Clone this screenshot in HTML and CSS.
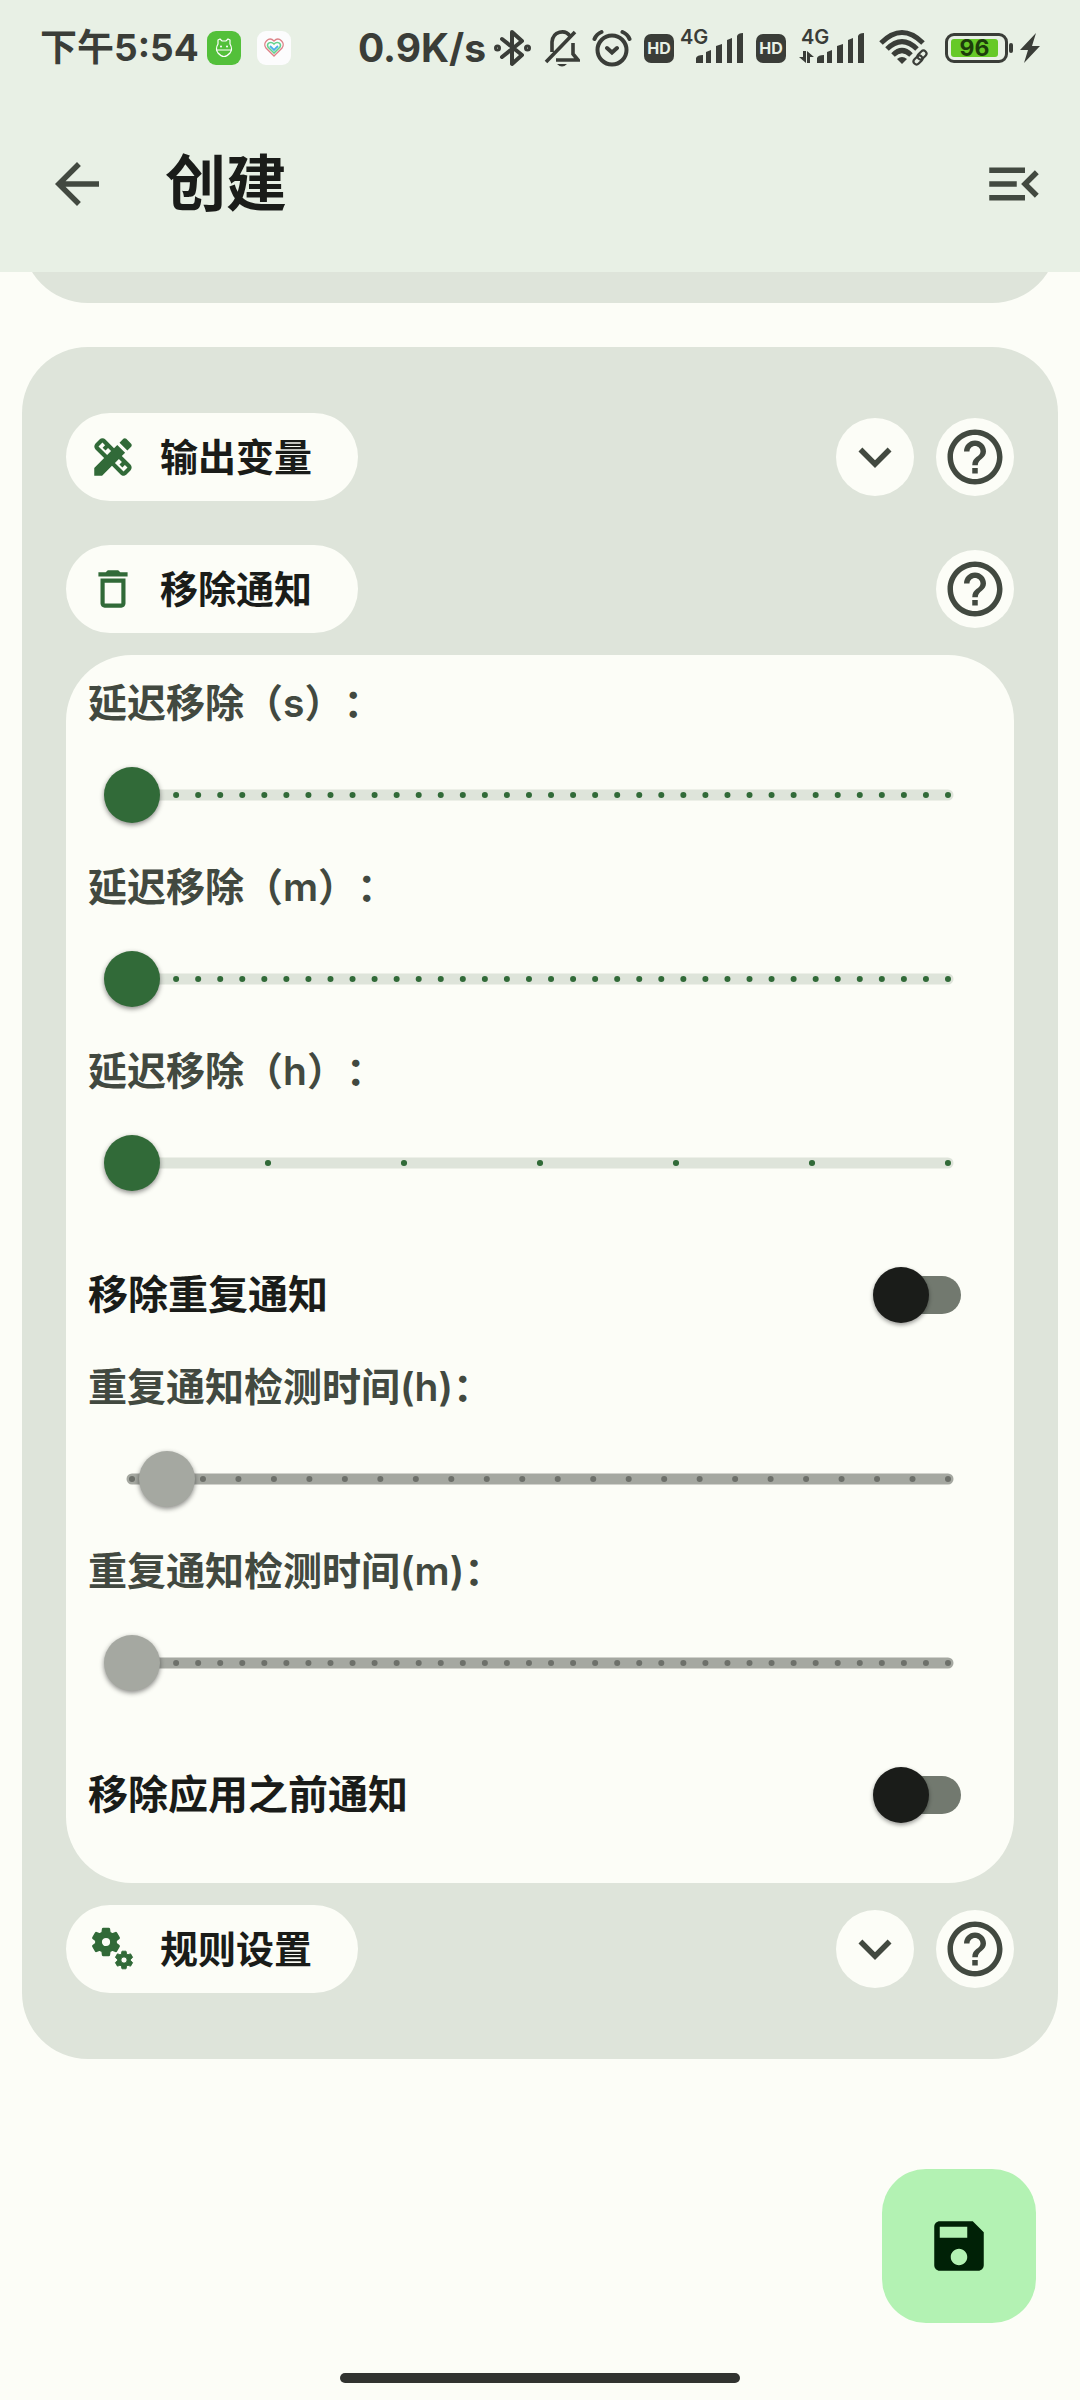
FILE: index.html
```html
<!DOCTYPE html>
<html lang="zh-CN">
<head>
<meta charset="utf-8">
<meta name="viewport" content="width=device-width, initial-scale=1">
<title>创建</title>
<link rel="stylesheet" href="styles.css">
</head>
<body>
<svg class="defs" aria-hidden="true">
  <symbol id="help" viewBox="0 0 24 24"><path d="M11 18h2v-2h-2v2zm1-16C6.480 2 2 6.480 2 12s4.480 10 10 10 10-4.480 10-10S17.520 2 12 2zm0 18c-4.410 0-8-3.590-8-8s3.590-8 8-8 8 3.590 8 8-3.590 8-8 8zm0-14c-2.210 0-4 1.790-4 4h2c0-1.100.9-2 2-2s2 .9 2 2c0 2-3 1.750-3 5h2c0-2.250 3-2.500 3-5 0-2.210-1.790-4-4-4z"/></symbol>
  <symbol id="expand" viewBox="0 0 24 24"><path d="M16.590 8.590 12 13.170 7.410 8.590 6 10l6 6 6-6z"/></symbol>
  <symbol id="gear" viewBox="0 0 24 24"><path stroke="currentColor" stroke-width="1" d="M19.140 12.940c.04-.3.06-.61.06-.94 0-.32-.02-.64-.07-.94l2.030-1.580c.18-.14.23-.41.12-.61l-1.920-3.320c-.12-.22-.37-.29-.59-.22l-2.390.96c-.5-.38-1.030-.7-1.620-.94l-.36-2.540c-.04-.24-.24-.41-.48-.41h-3.840c-.24 0-.43.17-.47.41l-.36 2.540c-.59.24-1.130.57-1.620.94l-2.390-.96c-.22-.08-.47 0-.59.22L2.740 8.870c-.12.21-.08.47.12.61l2.030 1.580c-.05.3-.09.63-.09.94s.02.64.07.94l-2.030 1.580c-.18.14-.23.41-.12.61l1.920 3.320c.12.22.37.29.59.22l2.390-.96c.5.38 1.030.7 1.620.94l.36 2.540c.05.24.24.41.48.41h3.840c.24 0 .44-.17.47-.41l.36-2.540c.59-.24 1.130-.56 1.620-.94l2.390.96c.22.08.47 0 .59-.22l1.920-3.320c.12-.22.07-.47-.12-.61l-2.010-1.580zM12 15.400a3.400 3.400 0 1 1 0-6.800 3.400 3.400 0 0 1 0 6.800z"/></symbol>
  <symbol id="bars" viewBox="0 0 48 30"><path d="M0 30v-5q1-3 7-3v8zM10 30V19l5-2v13zM20 30V13l6-2v19zM31 30V7l5-2v25zM41 30V3q1-3 6-3v30z"/></symbol>
</svg>

<header class="top">
  <div class="status">
    <div class="status-left">
      <span class="clock">下午5:54</span>
      <svg class="app" viewBox="0 0 34 34"><rect width="34" height="34" rx="9" fill="#53c03a"/><path d="M11 13V9l2-1 2 2h4l2-2 2 1v4q3 5 0 9-6 7-12 0-3-4 0-9zM9 19h16" fill="none" stroke="#fff" stroke-width="1.200"/><circle cx="14" cy="15.500" r="1" fill="#fff"/><circle cx="20" cy="15.500" r="1" fill="#fff"/></svg>
      <svg class="app" viewBox="0 0 34 34"><rect width="34" height="34" rx="9" fill="#fcfcfd"/><g fill="none"><path d="M17 25 9 17c-4-5 3-12 8-7 5-5 12 2 8 7z" stroke="#dc8287" stroke-width="1.400"/><path d="m17 22-6-6c-2-4 3-6 6-3 3-3 8-1 6 3z" stroke="#62d28e" stroke-width="1.600"/><path d="m13 15 4 4 4-4" stroke="#4bb0e6" stroke-width="1.800"/></g></svg>
    </div>
    <div class="status-right">
      <span class="speed">0.9K/s</span>
      <svg width="37" height="40" viewBox="0 0 37 40" fill="none" stroke="currentColor" stroke-width="4" stroke-linejoin="round" stroke-linecap="round"><path d="m8 11 20 16-10 9V4l10 9L8 29"/><circle cx="3.500" cy="20" r="1.500"/><circle cx="33.500" cy="20" r="1.500"/></svg>
      <svg class="bell" width="36" height="40" viewBox="0 0 36 40" fill="none" stroke="currentColor" stroke-width="3.600"><path d="M8 24V14C9 3 21 1 26 8M2 34 31 4M12 32h22l-5-6V15"/><path d="M13 36h10q-5 5-10 0z" fill="currentColor" stroke="none"/></svg>
      <svg class="alarm" width="40" height="40" viewBox="0 0 40 40" fill="none" stroke="currentColor" stroke-width="4" stroke-linecap="round"><circle cx="20" cy="22" r="14.500"/><path d="m15 20 5 4.500 5-4.500M2.500 11q2-5 7-7M37.500 11q-2-5-7-7"/></svg>
      <span class="hd">HD</span>
      <span class="signal"><span class="net">4G</span><svg class="bars"><use href="#bars"/></svg></span>
      <span class="hd">HD</span>
      <span class="signal second"><span class="net">4G</span><svg class="arrows" viewBox="0 0 15 12"><path d="M4 0h3v12L0 6h4zM8 0l7 6h-4v6H8z"/></svg><svg class="bars"><use href="#bars"/></svg></span>
      <svg class="wifi" width="50" height="36" viewBox="0 0 50 36" fill="none" stroke="currentColor" stroke-width="5"><path d="M2 13q21-21 42 0M8 19q15-15 30 0M14 25q9-9 18 0"/><path d="m23 34-5-5q5-4 10 0z" fill="currentColor" stroke="none"/><g stroke="#e8f0e5" stroke-width="7"><path d="m38 31 7-7"/></g><g stroke-width="2.200"><rect x="40" y="20" width="6" height="10" rx="3" transform="rotate(45 43 25)"/><rect x="36" y="25" width="6" height="10" rx="3" transform="rotate(45 39 30)"/></g></svg>
      <span class="battery"><span class="level">96</span></span>
      <svg class="bolt" width="20" height="30" viewBox="0 0 20 30"><path d="M16 0 0 17h8L4 30l16-17h-8z"/></svg>
    </div>
  </div>
  <div class="appbar">
    <button class="icon-btn" aria-label="返回"><svg class="icon" viewBox="0 0 24 24"><path d="M20 11H7.830l5.590-5.590L12 4l-8 8 8 8 1.410-1.410L7.830 13H20v-2z"/></svg></button>
    <h1>创建</h1>
    <button class="icon-btn menu" aria-label="菜单"><svg class="icon" viewBox="0 0 24 24"><path d="M3 18h13v-2H3v2zm0-5h10v-2H3v2zm0-7v2h13V6H3zm18 9.590L17.420 12 21 8.410 19.590 7l-5 5 5 5L21 15.590z"/></svg></button>
  </div>
</header>

<main>
  <section class="card previous"></section>
  <section class="card">
    <div class="row">
      <h2 class="chip"><svg viewBox="0 0 24 24"><path d="M16.240 11.510l1.570-1.570-3.750-3.750-1.570 1.570-4.140-4.130c-.78-.78-2.050-.78-2.830 0l-1.900 1.900c-.78.78-.78 2.050 0 2.830l4.130 4.130L3 17.250V21h3.750l4.760-4.760 4.130 4.130c.95.95 2.230.6 2.830 0l1.900-1.900c.78-.78.78-2.050 0-2.830l-4.130-4.130zm-7.060-.44L5.040 6.940l1.890-1.900L8.200 6.310 7.020 7.500l1.410 1.410 1.190-1.190 1.450 1.450-1.890 1.900zm7.880 7.890l-4.130-4.130 1.900-1.900 1.450 1.450-1.190 1.190 1.410 1.410 1.190-1.190 1.270 1.270-1.900 1.900zM20.710 7.040c.39-.39.39-1.020 0-1.410l-2.340-2.340c-.47-.47-1.120-.29-1.410 0l-1.830 1.830 3.750 3.750 1.830-1.830z"/></svg>输出变量</h2>
      <button class="round" aria-label="展开输出变量"><svg class="icon"><use href="#expand"/></svg></button>
      <button class="round" aria-label="输出变量帮助"><svg class="icon"><use href="#help"/></svg></button>
    </div>
    <div class="row spaced">
      <h2 class="chip"><svg viewBox="0 0 24 24"><path d="M6 19c0 1.100.9 2 2 2h8c1.100 0 2-.9 2-2V7H6v12zM8 9h8v10H8V9zm7.500-5l-1-1h-5l-1 1H5v2h14V4h-3.500z"/></svg>移除通知</h2>
      <button class="round" aria-label="移除通知帮助"><svg class="icon"><use href="#help"/></svg></button>
    </div>

    <div class="panel">
      <label for="delay-s">延迟移除（s）：</label>
      <div class="slider">
        <svg><line class="rail" x2="100%"/><line class="ticks" x2="100%" pathLength="37"/></svg>
        <input id="delay-s" type="range" min="0" max="37" value="0">
      </div>
      <label for="delay-m">延迟移除（m）：</label>
      <div class="slider">
        <svg><line class="rail" x2="100%"/><line class="ticks" x2="100%" pathLength="37"/></svg>
        <input id="delay-m" type="range" min="0" max="37" value="0">
      </div>
      <label for="delay-h">延迟移除（h）：</label>
      <div class="slider">
        <svg><line class="rail" x2="100%"/><line class="ticks" x2="100%" pathLength="6"/></svg>
        <input id="delay-h" type="range" min="0" max="6" value="0">
      </div>
      <div class="toggle">
        <label for="dup">移除重复通知</label>
        <input id="dup" type="checkbox" role="switch">
      </div>
      <label for="dup-h">重复通知检测时间(h)：</label>
      <div class="slider off">
        <svg><line class="rail" x2="100%"/><line class="ticks" x2="100%" pathLength="23"/></svg>
        <input id="dup-h" type="range" min="1" max="24" value="2" disabled>
      </div>
      <label for="dup-m">重复通知检测时间(m)：</label>
      <div class="slider off">
        <svg><line class="rail" x2="100%"/><line class="ticks" x2="100%" pathLength="37"/></svg>
        <input id="dup-m" type="range" min="0" max="37" value="0" disabled>
      </div>
      <div class="toggle">
        <label for="before">移除应用之前通知</label>
        <input id="before" type="checkbox" role="switch">
      </div>
    </div>

    <div class="row">
      <h2 class="chip"><svg viewBox="0 0 50 50"><use href="#gear" x="1" y="1" width="34" height="34"/><use href="#gear" x="25" y="25" width="22" height="22"/></svg>规则设置</h2>
      <button class="round" aria-label="展开规则设置"><svg class="icon"><use href="#expand"/></svg></button>
      <button class="round" aria-label="规则设置帮助"><svg class="icon"><use href="#help"/></svg></button>
    </div>
  </section>
</main>

<button class="fab" aria-label="保存"><svg class="icon" viewBox="0 0 24 24"><path d="M17 3H5c-1.110 0-2 .9-2 2v14c0 1.100.89 2 2 2h14c1.100 0 2-.9 2-2V7l-4-4zm-5 16c-1.660 0-3-1.340-3-3s1.340-3 3-3 3 1.340 3 3-1.340 3-3 3zm3-10H5V5h10v4z"/></svg></button>
<div class="handle"></div>
</body>
</html>
```
FILE: styles.css
```css
:root {
  --page: #fcfdf7;
  --bar: #e8f0e5;
  --card: #dee4da;
  --green: #316a38;
  --text: #1a1c19;
  --muted: #424940;
}

* { box-sizing: border-box; }

body {
  margin: 0;
  min-height: 100vh;
  background: var(--page);
  color: var(--text);
  font-family: Inter, "Noto Sans CJK SC", sans-serif;
  text-spacing-trim: space-all;
}

svg { display: block; flex: none; fill: currentColor; }
svg[fill="none"] { fill: none; }
.defs { position: absolute; width: 0; height: 0; }
.icon { width: 66px; height: 66px; }
button { padding: 0; border: 0; background: none; color: var(--muted); font: inherit; }
h1, h2 { margin: 0; font-weight: 700; }

/* Top area */
.top { position: sticky; top: 0; z-index: 2; background: var(--bar); }
.status {
  display: flex;
  justify-content: space-between;
  height: 96px;
  padding: 0 40px;
  align-items: center;
  color: #3a3d38;
  font-weight: 700;
}
.status-left, .status-right { display: flex; align-items: center; }
.clock { font-size: 37px; line-height: 48px; }
.app { width: 34px; height: 34px; margin-left: 8px; }
.app + .app { margin-left: 16px; }
.speed { font-size: 39px; line-height: 48px; margin-right: 8px; }
.bell { margin-left: 13px; }
.alarm { margin: 0 12px; }
.hd {
  width: 30px;
  border-radius: 7px;
  background: currentColor;
  font-size: 16px;
  line-height: 29px;
  text-align: center;
}
.hd::first-line { color: var(--bar); }
.signal { position: relative; width: 48px; margin: 0 12px 0 22px; }
.signal.second { margin: 0 14px 0 31px; }
.bars { width: 48px; height: 30px; }
.net { position: absolute; left: -16px; top: -6px; font-size: 20px; line-height: 20px; font-weight: 600; }
.arrows { position: absolute; left: -18px; bottom: 0; width: 15px; height: 12px; }
.battery {
  position: relative;
  width: 63px;
  height: 30px;
  margin: 0 12px 0 16px;
  padding: 3px;
  border: 3px solid;
  border-radius: 9px;
}
.battery::after {
  content: "";
  position: absolute;
  right: -8px;
  top: 7px;
  width: 4px;
  height: 10px;
  border-radius: 2px;
  background: currentColor;
}
.level {
  display: block;
  width: 47px;
  border-radius: 3px;
  background: #66c927;
  color: #1d3d0c;
  font-size: 23px;
  line-height: 18px;
  text-align: center;
}

.appbar { display: flex; align-items: center; height: 176px; padding: 0 33px 0 44px; }
.appbar h1 { margin-left: 55px; font-size: 61px; line-height: 80px; }
.menu { margin-left: auto; }

/* Cards */
.card { margin: 0 22px 44px; padding: 66px 44px; border-radius: 66px; background: var(--card); }
.card.previous { margin-top: -101px; }
.row { display: flex; align-items: center; gap: 22px; }
.row.spaced { margin: 44px 0 22px; }
.chip {
  display: flex;
  align-items: center;
  gap: 22px;
  min-width: 292px;
  height: 88px;
  margin-right: auto;
  padding: 0 44px 0 22px;
  border-radius: 44px;
  background: var(--page);
  font-size: 38px;
  line-height: 52px;
}
.chip svg { width: 50px; height: 50px; color: var(--green); }
.round {
  display: grid;
  place-items: center;
  width: 78px;
  height: 78px;
  border-radius: 50%;
  background: var(--page);
}

/* Settings panel */
.panel { margin-bottom: 22px; padding: 22px; border-radius: 66px; background: var(--page); }
.panel label {
  display: block;
  color: var(--muted);
  font-size: 39px;
  line-height: 52px;
  font-weight: 600;
}
.slider { display: grid; align-items: center; height: 132px; margin: 0 16px; }
.slider > * { grid-area: 1 / 1; }
.slider svg { width: calc(100% - 56px); height: 2px; margin: 0 28px; overflow: visible; }
.slider line { transform: translateY(1px); stroke-linecap: round; }
.rail { stroke: var(--card); stroke-width: 11px; }
.ticks { stroke: var(--green); stroke-width: 6px; stroke-dasharray: 0.001 0.999; stroke-dashoffset: 0.0005; }
.slider input { appearance: none; width: 100%; height: 56px; margin: 0; background: none; }
.slider input::-webkit-slider-thumb {
  appearance: none;
  width: 56px;
  height: 56px;
  border-radius: 50%;
  background: var(--green);
  box-shadow: 0 2px 5px rgba(0, 0, 0, 0.45);
}
.off .rail { stroke: #a5a8a1; }
.off .ticks { stroke: #6d706a; }
.slider.off input::-webkit-slider-thumb { background: #a5a8a1; }

.toggle { display: flex; align-items: center; justify-content: space-between; height: 132px; padding-right: 31px; }
.panel .toggle label { color: var(--text); font-size: 40px; }
.toggle input { appearance: none; position: relative; width: 88px; height: 56px; margin: 0; }
.toggle input::before {
  content: "";
  position: absolute;
  inset: 9px 0 9px 8px;
  border-radius: 19px;
  background: #72796f;
}
.toggle input::after {
  content: "";
  position: absolute;
  left: 0;
  top: 0;
  width: 56px;
  height: 56px;
  border-radius: 50%;
  background: var(--text);
  box-shadow: 0 2px 4px rgba(0, 0, 0, 0.4);
}
.toggle input:checked::after { left: 32px; }

/* Floating controls */
.fab {
  position: fixed;
  right: 44px;
  bottom: 77px;
  display: grid;
  place-items: center;
  width: 154px;
  height: 154px;
  border-radius: 44px;
  background: #b3f2b3;
  color: #002106;
}
.handle {
  position: fixed;
  left: 50%;
  bottom: 17px;
  width: 400px;
  height: 10px;
  margin-left: -200px;
  border-radius: 5px;
  background: #313330;
}
```
